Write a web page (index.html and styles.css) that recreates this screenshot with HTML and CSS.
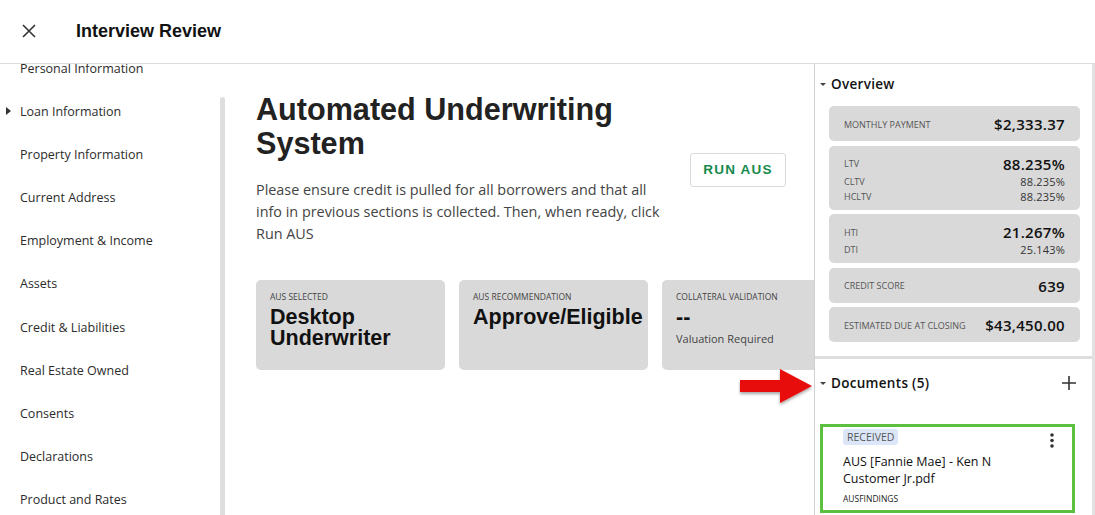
FILE: index.html
```html
<!DOCTYPE html>
<html lang="en">
<head>
<meta charset="utf-8">
<title>Interview Review</title>
<link rel="stylesheet" href="styles.css">
</head>
<body>
<div class="app">
  <header class="topbar">
    <button class="close" aria-label="Close">
      <svg width="16" height="16" viewBox="0 0 16 16"><path d="M2 2 L14 14 M14 2 L2 14" stroke="#333" stroke-width="1.6" fill="none"/></svg>
    </button>
    <h1 class="title">Interview Review</h1>
  </header>
  <div class="content">
    <aside class="sidebar">
      <nav class="nav">
        <ul class="nav-list">
          <li class="nav-item">Personal Information</li>
          <li class="nav-item active">Loan Information</li>
          <li class="nav-item">Property Information</li>
          <li class="nav-item">Current Address</li>
          <li class="nav-item">Employment &amp; Income</li>
          <li class="nav-item">Assets</li>
          <li class="nav-item">Credit &amp; Liabilities</li>
          <li class="nav-item">Real Estate Owned</li>
          <li class="nav-item">Consents</li>
          <li class="nav-item">Declarations</li>
          <li class="nav-item">Product and Rates</li>
        </ul>
      </nav>
      <div class="scroll-thumb"></div>
    </aside>
    <main class="main">
      <div class="intro">
        <div class="intro-text">
          <h2 class="heading">Automated Underwriting System</h2>
          <p class="lead">Please ensure credit is pulled for all borrowers and that all info in previous sections is collected. Then, when ready, click Run AUS</p>
        </div>
        <button class="run-btn">RUN AUS</button>
      </div>
      <div class="result-cards">
        <div class="result-card">
          <div class="result-label">AUS Selected</div>
          <div class="result-value">Desktop Underwriter</div>
        </div>
        <div class="result-card">
          <div class="result-label">AUS Recommendation</div>
          <div class="result-value">Approve/Eligible</div>
        </div>
        <div class="result-card">
          <div class="result-label">Collateral Validation</div>
          <div class="result-value">--</div>
          <div class="result-sub">Valuation Required</div>
        </div>
      </div>
    </main>
    <section class="panel">
      <div class="overview">
        <h3 class="panel-head"><span class="caret"></span>Overview</h3>
        <div class="stats">
          <div class="stat">
            <div class="stat-row main-row"><span class="stat-label">Monthly Payment</span><span class="stat-value">$2,333.37</span></div>
          </div>
          <div class="stat">
            <div class="stat-row main-row"><span class="stat-label">LTV</span><span class="stat-value">88.235%</span></div>
            <div class="stat-row sub-row"><span class="stat-label">CLTV</span><span class="stat-sub">88.235%</span></div>
            <div class="stat-row sub-row"><span class="stat-label">HCLTV</span><span class="stat-sub">88.235%</span></div>
          </div>
          <div class="stat">
            <div class="stat-row main-row"><span class="stat-label">HTI</span><span class="stat-value">21.267%</span></div>
            <div class="stat-row sub-row"><span class="stat-label">DTI</span><span class="stat-sub">25.143%</span></div>
          </div>
          <div class="stat">
            <div class="stat-row main-row"><span class="stat-label">Credit Score</span><span class="stat-value">639</span></div>
          </div>
          <div class="stat">
            <div class="stat-row main-row"><span class="stat-label">Estimated Due at Closing</span><span class="stat-value">$43,450.00</span></div>
          </div>
        </div>
      </div>
      <div class="documents">
        <div class="docs-head">
          <h3 class="panel-head"><span class="caret"></span>Documents (5)</h3>
          <svg class="plus" width="14" height="14" viewBox="0 0 14 14"><path d="M7 0 V14 M0 7 H14" stroke="#333" stroke-width="1.6"/></svg>
        </div>
        <div class="doc-card">
          <div class="doc-body">
            <span class="badge">Received</span>
            <div class="doc-name">AUS [Fannie Mae] - Ken N Customer Jr.pdf</div>
            <div class="doc-type">AUSFINDINGS</div>
          </div>
          <svg class="kebab" width="6" height="16" viewBox="0 0 6 16"><circle cx="3" cy="2" r="1.8" fill="#333"/><circle cx="3" cy="7.5" r="1.8" fill="#333"/><circle cx="3" cy="13" r="1.8" fill="#333"/></svg>
        </div>
      </div>
    </section>
  </div>
  <svg class="pointer" width="80" height="40" viewBox="0 0 80 40">
    <defs><filter id="sh" x="-20%" y="-20%" width="140%" height="160%"><feDropShadow dx="0" dy="2" stdDeviation="1.5" flood-color="#000" flood-opacity="0.35"/></filter></defs>
    <path d="M2 12 H42 V1 L74 18 L42 35 V24 H2 Z" fill="#e80c0c" filter="url(#sh)"/>
  </svg>
</div>
</body>
</html>
```
FILE: styles.css
```css
* { box-sizing: border-box; }
html, body { margin: 0; padding: 0; }
body {
  font-family: "Open Sans", "Noto Sans", sans-serif;
  color: #222;
  background: #fff;
}
.app {
  position: relative;
  width: 1095px;
  height: 515px;
  overflow: hidden;
  display: flex;
  flex-direction: column;
}
.topbar {
  height: 64px;
  flex-shrink: 0;
  display: flex;
  align-items: center;
  border-bottom: 1px solid #dcdcdc;
  padding-left: 20px;
}
.close {
  border: 0;
  background: none;
  padding: 0;
  width: 18px;
  height: 18px;
  display: flex;
  align-items: center;
  justify-content: center;
  margin-right: 38px;
  margin-top: -1px;
}
.title {
  margin: 0;
  font: 700 18px/24px "Liberation Sans", Arial, sans-serif;
  color: #111;
  margin-top: -2px;
}
.content {
  flex: 1;
  display: flex;
  min-height: 0;
}
.sidebar {
  width: 230px;
  flex-shrink: 0;
  display: flex;
  overflow: hidden;
}
.nav { width: 220px; flex-shrink: 0; }
.nav-list {
  list-style: none;
  margin: -17px 0 0;
  padding: 0;
}
.nav-item {
  position: relative;
  height: 43.1px;
  line-height: 43px;
  padding-left: 20px;
  font-size: 12.5px;
  color: #2c2c2c;
}
.nav-item.active::before {
  content: "";
  position: absolute;
  left: 6px;
  top: 17px;
  border-left: 5px solid #333;
  border-top: 4.5px solid transparent;
  border-bottom: 4.5px solid transparent;
}
.scroll-thumb {
  width: 5px;
  margin-top: 33px;
  background: #dedede;
  border-radius: 3px 3px 0 0;
}
.main {
  flex: 1;
  min-width: 0;
  overflow: hidden;
  padding: 28px 28px 0 26px;
}
.intro {
  display: flex;
  align-items: center;
  justify-content: space-between;
}
.intro-text { width: 420px; flex-shrink: 0; }
.heading {
  margin: 0;
  font: 700 30.6px/34px "Liberation Sans", Arial, sans-serif;
  color: #222;
}
.lead {
  margin: 19px 0 0;
  width: 418px;
  font-size: 14.4px;
  line-height: 22px;
  color: #444;
}
.run-btn {
  width: 96px;
  height: 34px;
  border: 1px solid #dadada;
  border-radius: 3px;
  background: #fff;
  color: #178a4c;
  font: 700 13.5px "Liberation Sans", Arial, sans-serif;
  letter-spacing: 1.2px;
  margin-top: 2px;
  flex-shrink: 0;
}
.result-cards {
  display: flex;
  gap: 14px;
  margin-top: 35px;
}
.result-card {
  width: 189px;
  height: 90px;
  flex-shrink: 0;
  background: #d9d9d9;
  border-radius: 5px;
  padding: 11px 14px;
}
.result-label {
  font-size: 8.5px;
  line-height: 12px;
  text-transform: uppercase;
  color: #444;
  margin-bottom: 4px;
}
.result-value {
  font: 700 21.5px/21px "Liberation Sans", Arial, sans-serif;
  color: #111;
}
.result-sub {
  font-size: 11px;
  line-height: 14px;
  color: #444;
  margin-top: 4px;
}
.panel {
  width: 281px;
  flex-shrink: 0;
  border-left: 1px solid #d0d0d0;
  border-right: 3px solid #e2e2e2;
  background: #fff;
  display: flex;
  flex-direction: column;
}
.panel-head {
  margin: 0;
  display: flex;
  align-items: center;
  font-size: 13.5px;
  font-weight: 600;
  letter-spacing: 0.3px;
  color: #111;
}
.caret {
  width: 0;
  height: 0;
  border-top: 3.5px solid #444;
  border-left: 3px solid transparent;
  border-right: 3px solid transparent;
  margin: 0 5px 0 5px;
}
.overview {
  padding: 0 12px 14px 0;
  border-bottom: 3px solid #dedede;
}
.overview .panel-head {
  height: 40px;
  margin-bottom: 2px;
}
.stats {
  margin-left: 14px;
  display: flex;
  flex-direction: column;
  gap: 4.5px;
}
.stat {
  background: #d9d9d9;
  border-radius: 5px;
  padding: 8px 15px 6px;
}
.stat-row {
  display: flex;
  align-items: center;
  justify-content: space-between;
}
.main-row { height: 20px; }
.stat:not(:has(.sub-row)) { padding-bottom: 7px; }
.sub-row { height: 15px; }
.stat-label {
  font-size: 9px;
  text-transform: uppercase;
  color: #555;
}
.stat-value {
  font-size: 15px;
  font-weight: 600;
  color: #111;
  letter-spacing: 0.3px;
}
.stat-sub {
  font-size: 11px;
  color: #333;
  letter-spacing: 0.2px;
}
.documents { flex: 1; }
.docs-head {
  height: 47px;
  padding-top: 1px;
  display: flex;
  align-items: center;
  justify-content: space-between;
  padding-right: 16px;
}
.doc-card {
  margin: 18px 0 0 5px;
  width: 255px;
  height: 89px;
  border: 3px solid #5cbf40;
  display: flex;
  justify-content: space-between;
  padding: 2px 17px 0 20px;
}
.doc-body {
  display: flex;
  flex-direction: column;
  align-items: flex-start;
}
.badge {
  display: block;
  background: #dbe6f8;
  border-radius: 3px;
  padding: 0 4px;
  font-size: 10.5px;
  line-height: 16px;
  text-transform: uppercase;
  color: #555;
}
.doc-name {
  margin-top: 8px;
  font-size: 12.5px;
  line-height: 17px;
  color: #111;
  width: 180px;
}
.doc-type {
  margin-top: 6px;
  font-size: 8.5px;
  line-height: 12px;
  color: #222;
}
.kebab { margin-top: 4px; }
.pointer {
  position: absolute;
  left: 738px;
  top: 368px;
}
```
